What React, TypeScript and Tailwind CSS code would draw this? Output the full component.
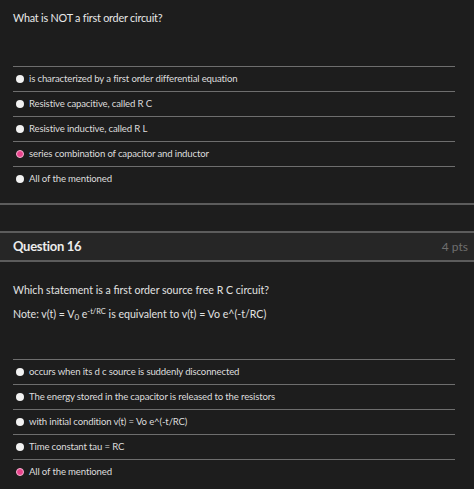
import React from 'react';

type Opt = { label: React.ReactNode; picked?: boolean };

const Radio = ({ picked }: { picked?: boolean }) =>
  picked ? (
    <span className="w-[8px] h-[8px] rounded-full bg-[#e8438c] border-[1.5px] border-[#f7b3d2] shrink-0" />
  ) : (
    <span className="w-[8px] h-[8px] rounded-full bg-[#f2f2f2] shrink-0" />
  );

const Options = ({ items }: { items: Opt[] }) => (
  <div className="mr-[6px]">
    {items.map((o, i) => (
      <div
        key={i}
        className="h-[25px] border-t border-[#6e6e6e] flex items-center gap-[5px] pl-[3px] text-[9.6px] tracking-[-0.15px] text-[#dcdcdc]"
      >
        <Radio picked={o.picked} />
        <span>{o.label}</span>
      </div>
    ))}
  </div>
);

export default function App() {
  return (
    <div className="w-[474px] h-[489px] bg-[#1d1d1d] overflow-hidden font-['Lato',sans-serif]">
      <div className="px-[13px] pt-[10px] pb-[12px]">
        <p className="text-[10.8px] tracking-[-0.2px] leading-[16px] text-[#e8e8e8]">What is NOT a first order circuit?</p>
        <div className="mt-[40px]">
          <Options
            items={[
              { label: 'is characterized by a first order differential equation' },
              { label: 'Resistive capacitive, called R C' },
              { label: 'Resistive inductive, called R L' },
              { label: 'series combination of capacitor and inductor', picked: true },
              { label: 'All of the mentioned' },
            ]}
          />
        </div>
      </div>

      <div className="h-[28px] border-t-2 border-[#5c5c5c]" />

      <div className="h-[31px] border-y-2 border-[#5c5c5c] bg-[#262626] flex items-center justify-between pl-[13px] pr-[6px]">
        <span className="text-[13px] tracking-[-0.3px] font-bold text-[#ececec]">Question 16</span>
        <span className="text-[12px] text-[#6f6f6f]">4 pts</span>
      </div>

      <div className="px-[13px] pt-[20px]">
        <p className="text-[10.6px] leading-[16px] text-[#e2e2e2]">
          Which statement is a first order source free R C circuit?
        </p>
        <p className="mt-[8px] text-[10.6px] leading-[16px] text-[#e2e2e2]">
          Note: v(t) = V<sub className="text-[8px]">0</sub> e
          <sup className="text-[7.5px]">-t/RC</sup> is equivalent to v(t) = Vo e^(-t/RC)
        </p>
        <div className="mt-[37px]">
          <Options
            items={[
              { label: 'occurs when its d c source is suddenly disconnected' },
              { label: 'The energy stored in the capacitor is released to the resistors' },
              { label: 'with initial condition v(t) = Vo e^(-t/RC)' },
              { label: 'Time constant tau = RC' },
              { label: 'All of the mentioned', picked: true },
            ]}
          />
        </div>
      </div>
    </div>
  );
}
